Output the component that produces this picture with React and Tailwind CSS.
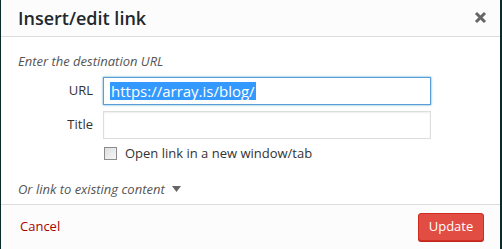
export default function App() {
  const font = { fontFamily: '"Open Sans", "Noto Sans", sans-serif' };
  return (
    <div className="w-[502px] h-[249px] bg-[#0b2a2c] pl-px pr-[2px] overflow-hidden" style={font}>
      <div className="h-full bg-white flex flex-col">
        {/* header */}
        <div className="h-[37px] shrink-0 bg-[#fcfcfc] border-b border-[#dddddd] flex items-center justify-between pl-[17px] pr-[13px]">
          <div className="text-[18px] font-semibold leading-none text-[#23282d] -mt-[1px]">Insert/edit link</div>
          <svg width="13" height="13" viewBox="0 0 13 13" className="-mt-[1px]">
            <path d="M2 2 L11 11 M11 2 L2 11" stroke="#666" strokeWidth="3" strokeLinecap="butt" />
          </svg>
        </div>

        {/* body */}
        <div className="flex-1 pl-[17px] pt-[14px]">
          <div className="text-[13px] italic text-[#555] leading-[20px]">Enter the destination URL</div>
          <div className="flex items-center mt-[6px]">
            <div className="w-[80px] text-right pr-[5px] text-[13px] text-[#333]">URL</div>
            <div className="ml-[5px] w-[328px] h-[28px] border border-[#5b9dd9] shadow-[0_0_2px_rgba(30,140,190,0.8)] flex items-center pl-[6px]">
              <span className="bg-[#3399ff] text-white text-[15px] leading-[18px] px-px">https://array.is/blog/</span>
            </div>
          </div>
          <div className="flex items-center mt-[6px]">
            <div className="w-[80px] text-right pr-[5px] text-[13px] text-[#333]">Title</div>
            <div className="ml-[5px] w-[328px] h-[28px] border border-[#dddddd] shadow-[inset_0_1px_2px_rgba(0,0,0,0.07)]" />
          </div>
          <div className="flex items-center ml-[86px] mt-[5px]">
            <div className="w-[13px] h-[13px] border border-[#8c8c8c] bg-gradient-to-br from-[#dedede] to-[#f7f7f7]" />
            <div className="ml-[8px] text-[13px] text-[#333]">Open link in a new window/tab</div>
          </div>
          <div className="flex items-center mt-[16px]">
            <span className="text-[13px] italic text-[#555]">Or link to existing content</span>
            <svg width="9" height="6" viewBox="0 0 9 6" className="ml-[7px]">
              <path d="M0 0 L9 0 L4.5 6 Z" fill="#666" />
            </svg>
          </div>
        </div>

        {/* footer */}
        <div className="h-[45px] shrink-0 bg-[#fcfcfc] border-t border-[#dddddd] flex items-center justify-between pl-[19px] pr-[16px]">
          <span className="text-[13px] text-[#a00] -mt-[1px]">Cancel</span>
          <button className="w-[66px] h-[28px] rounded-[3px] bg-[#e14d43] border border-[#d02c21] text-white text-[13px] shadow-[0_1px_0_#ba281e] -mt-[1px]">
            Update
          </button>
        </div>
      </div>
    </div>
  );
}
